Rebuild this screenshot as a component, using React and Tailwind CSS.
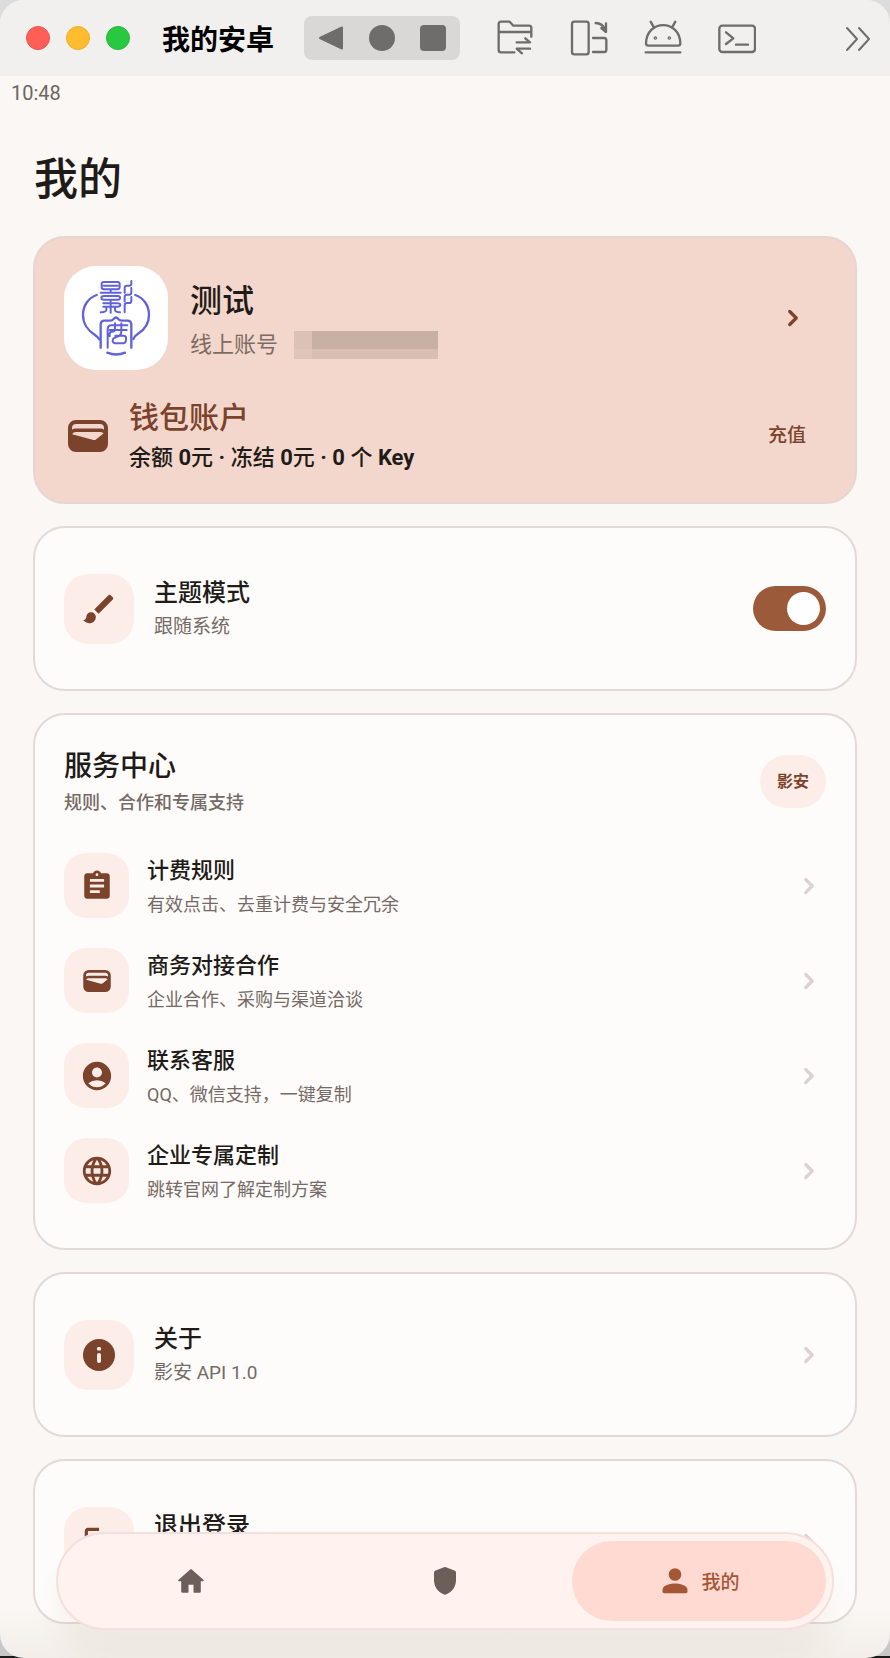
import React, { useState } from 'react';
import { ChevronRight } from 'lucide-react';
import { MdAccountCircle, MdAssignment, MdBrush, MdLanguage } from 'react-icons/md';

const WalletIcon = ({ className }) => (
  <svg viewBox="0 0 40 32" className={className} fill="currentColor" aria-hidden="true">
    <path
      fillRule="evenodd"
      d="M8 0h24a8 8 0 0 1 8 8v16a8 8 0 0 1-8 8H8a8 8 0 0 1-8-8V8a8 8 0 0 1 8-8Zm0 4C5.500 4 4 5.500 4 8v1.500C5 8.800 6.500 8.400 8 8.400h24c1.500 0 3 .4 4 1.100V8c0-2.500-1.500-4-4-4H8ZM8 12c-1.800 0-3.200.8-3.800 2.300L25.500 20c.9.2 1.700 0 2.400-.5l7.600-6C34.800 12.500 33.500 12 32 12H8Z"
    />
  </svg>
);

const InfoIcon = ({ className }) => (
  <svg viewBox="0 0 32 32" className={className} aria-hidden="true">
    <circle cx="16" cy="16" r="16" fill="currentColor" />
    <rect x="14" y="8" width="4" height="3.500" rx="1.200" fill="#fdece9" />
    <rect x="14" y="14" width="4" height="10" rx="2" fill="#fdece9" />
  </svg>
);

const LogoutIcon = ({ className }) => (
  <svg viewBox="0 0 24 24" className={className} fill="currentColor" aria-hidden="true">
    <path d="M5 21q-.8 0-1.400-.6T3 19V5q0-.8.6-1.400T5 3h7v2H5v14h7v2H5Zm11-4-1.400-1.450L17.200 13H9v-2h8.200l-2.600-2.550L16 7l5 5-5 5Z" />
  </svg>
);

const HomeIcon = ({ className }) => (
  <svg viewBox="0 0 26 24" className={className} fill="currentColor" aria-hidden="true">
    <path d="M12.200.4a1.200 1.200 0 0 1 1.600 0L25.400 10.700c.7.6.4 1.500-.5 1.500H22.800V22.600c0 .8-.5 1.200-1.200 1.200H16.500c-.6 0-1-.4-1-1V15.800h-5V22.800c0 .6-.4 1-1 1H4.400c-.7 0-1.200-.4-1.200-1.200V12.200H1.100c-.9 0-1.200-.9-.5-1.500Z" />
  </svg>
);

const ShieldIcon = ({ className }) => (
  <svg viewBox="0 0 22 28" className={className} fill="currentColor" aria-hidden="true">
    <path d="M10 .3a3 3 0 0 1 2 0l8.400 3.100A2.400 2.400 0 0 1 22 5.700V13c0 6.800-4 12.200-10.200 14.500a2.400 2.400 0 0 1-1.600 0C4 25.200 0 19.800 0 13V5.700a2.400 2.400 0 0 1 1.600-2.300Z" />
  </svg>
);

const PersonIcon = ({ className }) => (
  <svg viewBox="0 0 26 26" className={className} fill="currentColor" aria-hidden="true">
    <circle cx="13" cy="6.500" r="6.300" />
    <path d="M13 15.500c4.500 0 12.500 1.700 12.500 6.300v1.700c0 1-.7 1.700-1.700 1.700H2.200c-1 0-1.700-.7-1.700-1.700v-1.700C.5 17.200 8.500 15.500 13 15.500Z" />
  </svg>
);

const BrandLogo = () => (
  <svg
    viewBox="12 18 312 312"
    className="h-full w-full"
    fill="none"
    stroke="#6062da"
    strokeWidth="6"
    strokeLinecap="round"
    strokeLinejoin="round"
    role="img"
    aria-label="影安"
  >
    <path strokeWidth="7" d="M110 105C84 114 69 138 69 165C69 190 84 212 104 224Q113 230 118 238" />
    <path strokeWidth="7" d="M226 105C252 114 267 138 267 165C267 190 252 210 234 221Q224 227 220 237" />
    <path strokeWidth="7" d="M142 278Q169 289 195 278" />
    {/* upper seal mark */}
    <path d="M132 66H172Q179 66 179 72V82Q179 88 172 88H132Q125 88 125 82V72Q125 66 132 66ZM131 77H173M152 88V98M122 98H182" />
    <path d="M132 108H174Q180 108 180 113Q180 119 174 119H132Q124 119 124 113Q124 108 132 108ZM130 130H172Q181 130 181 135Q181 140 172 140H130M152 119V158M139 140V150Q139 156 122 157M165 140V150Q165 156 180 157" />
    <path d="M214 63V72Q214 77 207 77H201Q194 77 194 84V98M214 84V98Q214 104 207 104H201Q194 104 194 111V124M214 111V122Q214 129 207 129H201Q194 129 194 136V157" />
    {/* lower seal mark */}
    <path
      strokeWidth="7"
      d="M122 263V194Q122 182 134 182H149Q158 182 161 177Q168 168 175 177Q178 182 187 182H202Q214 182 214 194V263"
    />
    <path d="M143 263V208Q143 196 154 196H202M165 190V207Q165 215 156 215Q149 215 149 222V229M149 210H200M184 190V214Q184 228 170 231Q158 234 158 242Q158 250 170 250H186Q198 250 198 239V233Q198 227 190 227H166" />
  </svg>
);

const toolbarIcons = [
  {
    label: '文件传输',
    viewBox: '108 57 114 114',
    art: (
      <>
        <path d="M163 157H123Q116 157 116 150V72Q116 65 123 65H149L160 77H207Q214 77 214 84V110M116 96H214" />
        <path d="M170 127H210L196 115M210 146H170L186 160" />
      </>
    ),
  },
  {
    label: '旋转屏幕',
    viewBox: '329 57 114 114',
    art: (
      <>
        <rect x="335" y="65" width="50" height="98" rx="7" />
        <path d="M398 114H431Q438 114 438 121V149Q438 156 431 156H398M406 69Q426 70 433 86M437 70V96L423 84" />
      </>
    ),
  },
  {
    label: '安卓',
    viewBox: '552 57 114 114',
    art: (
      <>
        <path d="M558 130C560 57 659 57 661 130Q661 137 654 137H565Q558 137 558 130ZM572 65L582 83M646 65L636 83M557 157H661" />
        <circle cx="586" cy="114" r="2" />
        <circle cx="628" cy="114" r="2" />
      </>
    ),
  },
  {
    label: '终端',
    viewBox: '774 57 114 114',
    art: (
      <>
        <rect x="778" y="77" width="107" height="79" rx="9" />
        <path d="M798 97L820 115L798 132M828 134H864" />
      </>
    ),
  },
];

const services = [
  { title: '计费规则', desc: '有效点击、去重计费与安全冗余', icon: <MdAssignment size={34} /> },
  { title: '商务对接合作', desc: '企业合作、采购与渠道洽谈', icon: <WalletIcon className="h-[22px] w-7" /> },
  { title: '联系客服', desc: 'QQ、微信支持，一键复制', icon: <MdAccountCircle size={34} /> },
  { title: '企业专属定制', desc: '跳转官网了解定制方案', icon: <MdLanguage size={34} /> },
];

const TitleBar = () => (
  <header className="flex h-[76px] items-center bg-[#f1f0ee] pr-[18px] pl-[26px] text-[#6e6d6b]">
    <div className="flex gap-4">
      <button type="button" aria-label="关闭" className="size-6 rounded-full border border-[#f0524b] bg-[#ff5f57]" />
      <button type="button" aria-label="最小化" className="size-6 rounded-full border border-[#f0ae2b] bg-[#febc2e]" />
      <button type="button" aria-label="最大化" className="size-6 rounded-full border border-[#24bb3b] bg-[#28c840]" />
    </div>
    <span className="ml-8 pt-[6px] text-[28px] leading-9 font-bold whitespace-nowrap text-black">我的安卓</span>
    <div className="ml-[30px] flex h-11 w-[156px] items-center justify-between rounded-lg bg-[#d9d8d6] px-[14px]">
      <button type="button" aria-label="返回">
        <svg viewBox="0 0 26 26" className="size-[26px]" fill="currentColor" stroke="currentColor" strokeWidth="2" strokeLinejoin="round">
          <path d="M2 13L24 2.500V23.500Z" />
        </svg>
      </button>
      <button type="button" aria-label="主屏幕" className="size-[26px] rounded-full bg-[#6e6d6b]" />
      <button type="button" aria-label="最近任务" className="size-[26px] rounded-sm bg-[#6e6d6b]" />
    </div>
    <div className="ml-9 flex gap-9">
      {toolbarIcons.map((item) => (
        <button key={item.label} type="button" aria-label={item.label}>
          <svg
            viewBox={item.viewBox}
            className="size-[38px]"
            fill="none"
            stroke="currentColor"
            strokeWidth="7"
            strokeLinecap="round"
            strokeLinejoin="round"
          >
            {item.art}
          </svg>
        </button>
      ))}
    </div>
    <button type="button" aria-label="更多" className="ml-auto">
      <svg viewBox="0 0 28 28" className="size-7" fill="none" stroke="currentColor" strokeWidth="2" strokeLinecap="round" strokeLinejoin="round">
        <path d="M3 4L13 15L3 26M15 4L25 15L15 26" />
      </svg>
    </button>
  </header>
);

const IconTile = ({ children, small }) => (
  <span
    className={`flex shrink-0 items-center justify-center bg-[#fdede9] text-[#7b432b] ${
      small ? 'size-[65px] rounded-[22px]' : 'size-[70px] rounded-3xl'
    }`}
  >
    {children}
  </span>
);

const RowChevron = () => (
  <span className="ml-auto flex w-[34px] shrink-0 justify-center text-[#dbd3d0]">
    <ChevronRight size={26} strokeWidth={3} />
  </span>
);

const cardClass = 'rounded-[32px] border-2 border-[#e3d9d6] bg-[#fefcfa] px-[29px]';

const SettingText = ({ title, desc }) => (
  <span className="flex flex-col">
    <span className="text-2xl leading-9 font-medium text-[#1f1b18]">{title}</span>
    <span className="text-[19px] leading-8 text-[#756a65]">{desc}</span>
  </span>
);

const LinkCard = ({ title, desc, icon }) => (
  <a href="#" className={`flex h-[165px] items-center gap-5 ${cardClass}`}>
    <IconTile>{icon}</IconTile>
    <SettingText title={title} desc={desc} />
    <RowChevron />
  </a>
);

const AccountCard = () => (
  <section className="flex flex-col gap-[22px] rounded-[32px] border-2 border-[#e6d6cf] bg-[#f3d7cc] px-[29px] py-7">
    <a href="#" className="flex items-center gap-[22px]">
      <span className="size-[104px] shrink-0 overflow-hidden rounded-[32px] bg-white">
        <BrandLogo />
      </span>
      <span className="flex flex-col pt-1">
        <span className="text-[32px] leading-[48px] font-medium text-[#1f1b18]">测试</span>
        <span className="mt-[2px] flex items-center text-[22px] leading-9 text-[#7d6b63]">
          线上账号
          <span className="ml-4 grid h-7 w-36 grid-cols-[18px_1fr] grid-rows-[18px_10px]" aria-hidden="true">
            <span className="bg-[#dcc1b6]" />
            <span className="bg-[#c9b0a5]" />
            <span className="bg-[#e0c5ba]" />
            <span className="bg-[#d9beb3]" />
          </span>
        </span>
      </span>
      <span className="ml-auto flex w-[66px] shrink-0 justify-center text-[#7b432b]">
        <ChevronRight size={26} strokeWidth={3} />
      </span>
    </a>
    <div className="flex h-[82px] items-center gap-[17px] pt-[6px] text-[#7b432b]">
      <span className="flex w-12 shrink-0 justify-center">
        <WalletIcon className="h-8 w-10" />
      </span>
      <div>
        <h2 className="text-3xl leading-[44px] font-medium">钱包账户</h2>
        <p className="text-[22px] leading-9 font-medium text-[#1f1b18]">
          余额 <b>0</b>元 <b>·</b> 冻结 <b>0</b>元 <b>·</b> <b>0</b> 个 <b>Key</b>
        </p>
      </div>
      <button type="button" className="ml-auto shrink-0 px-5 text-[19px] leading-7 font-medium">
        充值
      </button>
    </div>
  </section>
);

const ThemeCard = () => {
  const [followSystem, setFollowSystem] = useState(true);

  return (
    <label className={`flex h-[165px] cursor-pointer items-center gap-5 ${cardClass}`}>
      <IconTile>
        <MdBrush size={38} />
      </IconTile>
      <SettingText title="主题模式" desc="跟随系统" />
      <input
        type="checkbox"
        role="switch"
        checked={followSystem}
        onChange={(e) => setFollowSystem(e.target.checked)}
        className="ml-auto h-[45px] w-[73px] shrink-0 cursor-pointer appearance-none rounded-full bg-[#cfc5c0] p-[6px] transition-colors before:block before:size-[33px] before:rounded-full before:bg-white checked:bg-[#9b5a3a] checked:before:ml-7"
      />
    </label>
  );
};

const ServiceCard = () => (
  <section className={`pt-7 pb-[30px] ${cardClass}`}>
    <div className="flex h-[77px] items-center justify-between">
      <div className="pt-[2px]">
        <h2 className="text-[28px] leading-10 font-medium text-[#1f1b18]">服务中心</h2>
        <p className="text-lg leading-8 font-medium text-[#756a65]">规则、合作和专属支持</p>
      </div>
      <span className="flex h-[53px] items-center rounded-full bg-[#fdede9] px-[17px] text-base font-bold text-[#7b432b]">
        影安
      </span>
    </div>
    <ul className="mt-[18px]">
      {services.map((item) => (
        <li key={item.title}>
          <a href="#" className="flex h-[95px] items-center gap-[18px]">
            <IconTile small>{item.icon}</IconTile>
            <span className="flex flex-col pt-[2px]">
              <span className="text-[22px] leading-9 font-medium text-[#1f1b18]">{item.title}</span>
              <span className="text-lg leading-8 text-[#756a65]">{item.desc}</span>
            </span>
            <RowChevron />
          </a>
        </li>
      ))}
    </ul>
  </section>
);

const BottomNav = () => (
  <nav className="fixed inset-x-14 bottom-7 grid h-[98px] grid-cols-3 rounded-full border-2 border-[#f5dfdc] bg-[#fff2ef] px-[6px] py-[7px] text-[#6c5f59] shadow-[0_28px_28px_rgba(90,70,40,0.05)]">
    <a href="#" aria-label="首页" className="flex items-center justify-center">
      <HomeIcon className="h-6 w-[26px]" />
    </a>
    <a href="#" aria-label="安全" className="flex items-center justify-center">
      <ShieldIcon className="h-7 w-[22px]" />
    </a>
    <a
      href="#"
      aria-current="page"
      className="flex items-center justify-center gap-[13px] rounded-full bg-[#fedad2] pl-1 text-[19px] leading-7 font-medium text-[#a55636]"
    >
      <PersonIcon className="size-[26px]" />
      <span className="pt-1">我的</span>
    </a>
  </nav>
);

const App = () => {
  return (
    <div className="min-h-screen bg-[linear-gradient(to_top,#1c1c1c_2px,#c8c8c8_2px,#dcdcdc)] font-['Roboto','Noto_Sans_CJK_SC',sans-serif]">
      <div className="min-h-screen overflow-hidden rounded-3xl bg-[#fbf7f4] bg-[linear-gradient(to_top,#f3eee9,transparent_54px)]">
        <TitleBar />
        <div className="flex h-[34px] items-center px-[11px] text-[20px] text-[#6b6662]">10:48</div>
        <main className="px-[33px] pb-[34px]">
          <h1 className="mt-11 mb-[30px] px-px text-[44px] leading-[52px] font-medium text-[#1f1b18]">我的</h1>
          <div className="flex flex-col gap-[22px]">
            <AccountCard />
            <ThemeCard />
            <ServiceCard />
            <LinkCard title="关于" desc="影安 API 1.0" icon={<InfoIcon className="size-8" />} />
            <LinkCard title="退出登录" desc="清除本机登录状态" icon={<LogoutIcon className="size-[38px]" />} />
          </div>
        </main>
      </div>
      <BottomNav />
    </div>
  );
};

export default App;
